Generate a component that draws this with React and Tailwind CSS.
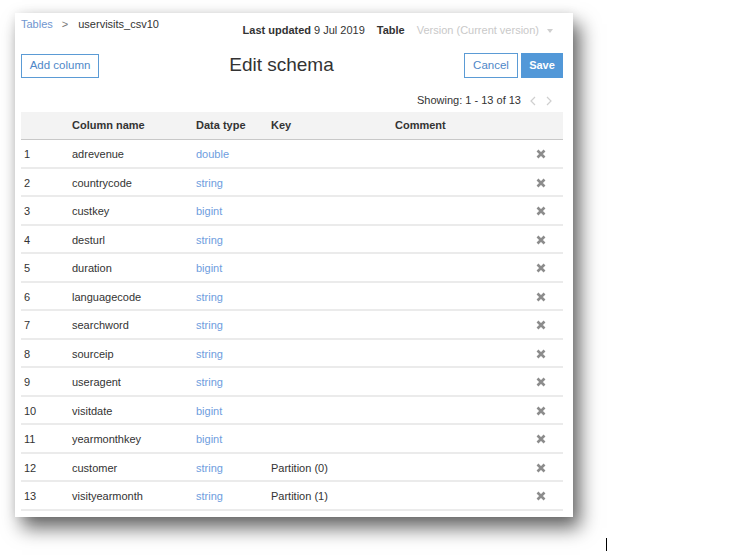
import React from 'react';

const rows = [
  ['adrevenue', 'double', ''],
  ['countrycode', 'string', ''],
  ['custkey', 'bigint', ''],
  ['desturl', 'string', ''],
  ['duration', 'bigint', ''],
  ['languagecode', 'string', ''],
  ['searchword', 'string', ''],
  ['sourceip', 'string', ''],
  ['useragent', 'string', ''],
  ['visitdate', 'bigint', ''],
  ['yearmonthkey', 'bigint', ''],
  ['customer', 'string', 'Partition (0)'],
  ['visityearmonth', 'string', 'Partition (1)'],
];

function RemoveIcon() {
  return (
    <svg width="10" height="10" viewBox="0 0 10 10">
      <path d="M1.5 1.5 L8.5 8.5 M8.5 1.5 L1.5 8.5" stroke="#8c8c8c" strokeWidth="2.6" strokeLinecap="butt" />
    </svg>
  );
}

function Chevron({ dir }) {
  return (
    <svg width="6" height="10" viewBox="0 0 6 10">
      <path
        d={dir === 'left' ? 'M5 1 L1 5 L5 9' : 'M1 1 L5 5 L1 9'}
        fill="none"
        stroke="#cfcfcf"
        strokeWidth="1.2"
      />
    </svg>
  );
}

export default function App() {
  return (
    <div className="relative w-[751px] h-[555px] bg-white overflow-hidden pl-[15px] pt-[13px] font-['Liberation_Sans',Arial,sans-serif] text-[11px] text-[#333]">
      <div className="w-[558px] h-[504px] bg-white pl-[6px] pr-[10px] shadow-[7px_11px_18px_rgba(0,0,0,0.6),0_0_10px_rgba(0,0,0,0.08)]">
        {/* top row */}
        <div className="flex items-start h-[40px]">
          <div className="flex items-center mt-[5px] leading-[13px]">
            <span className="text-[#6f96cf]">Tables</span>
            <span className="ml-[9px] text-[#777]">&gt;</span>
            <span className="ml-[10px] text-[#333]">uservisits_csv10</span>
          </div>
          <div className="ml-auto mr-[10px] mt-[11px] flex items-center leading-[13px]">
            <span className="font-bold">Last updated</span>
            <span className="ml-[3px]">9 Jul 2019</span>
            <span className="ml-[12px] font-bold">Table</span>
            <span className="ml-[12px] text-[#c9c9c9]">Version (Current version)</span>
            <svg className="ml-[8px]" width="6" height="4" viewBox="0 0 6 4">
              <path d="M0 0 L6 0 L3 4 Z" fill="#cfcfcf" />
            </svg>
          </div>
        </div>

        {/* button row */}
        <div className="flex items-center h-[25px]">
          <button className="w-[78px] h-[24px] border border-[#5b9bd5] text-[#4f88c8] text-[11.5px] bg-white">
            Add column
          </button>
          <div className="flex-1 text-center text-[19px] leading-[22px] text-[#333] -mt-[2px]">Edit schema</div>
          <button className="w-[54px] h-[25px] border border-[#5b9bd5] text-[#4f88c8] text-[11.5px] bg-white">
            Cancel
          </button>
          <button className="ml-[3px] w-[42px] h-[25px] bg-[#5298d8] text-white font-bold text-[11px]">
            Save
          </button>
        </div>

        {/* showing row */}
        <div className="flex items-center justify-end h-[13px] mt-[16px] pr-[11px] leading-[13px]">
          <span>Showing: 1 - 13 of 13</span>
          <span className="ml-[9px] flex items-center"><Chevron dir="left" /></span>
          <span className="ml-[10px] flex items-center"><Chevron dir="right" /></span>
        </div>

        {/* table */}
        <div className="mt-[5px]">
          <div className="grid grid-cols-[51px_124px_75px_124px_1fr_44px] items-center h-[28px] bg-[#f3f3f3] border-b border-[#c8c8c8] font-bold">
            <div />
            <div>Column name</div>
            <div>Data type</div>
            <div>Key</div>
            <div>Comment</div>
            <div />
          </div>
          {rows.map((r, i) => (
            <div
              key={i}
              className="grid grid-cols-[51px_124px_75px_124px_1fr_44px] items-center h-[28.5px] pt-[2px] border-b-2 border-[#ebebeb]"
            >
              <div className="pl-[3px]">{i + 1}</div>
              <div>{r[0]}</div>
              <div className="text-[#6e9dde]">{r[1]}</div>
              <div>{r[2]}</div>
              <div />
              <div className="flex justify-center">
                <RemoveIcon />
              </div>
            </div>
          ))}
        </div>
      </div>

      {/* text cursor */}
      <div className="absolute left-[606px] top-[538px] w-[1px] h-[13px] bg-black" />
    </div>
  );
}
